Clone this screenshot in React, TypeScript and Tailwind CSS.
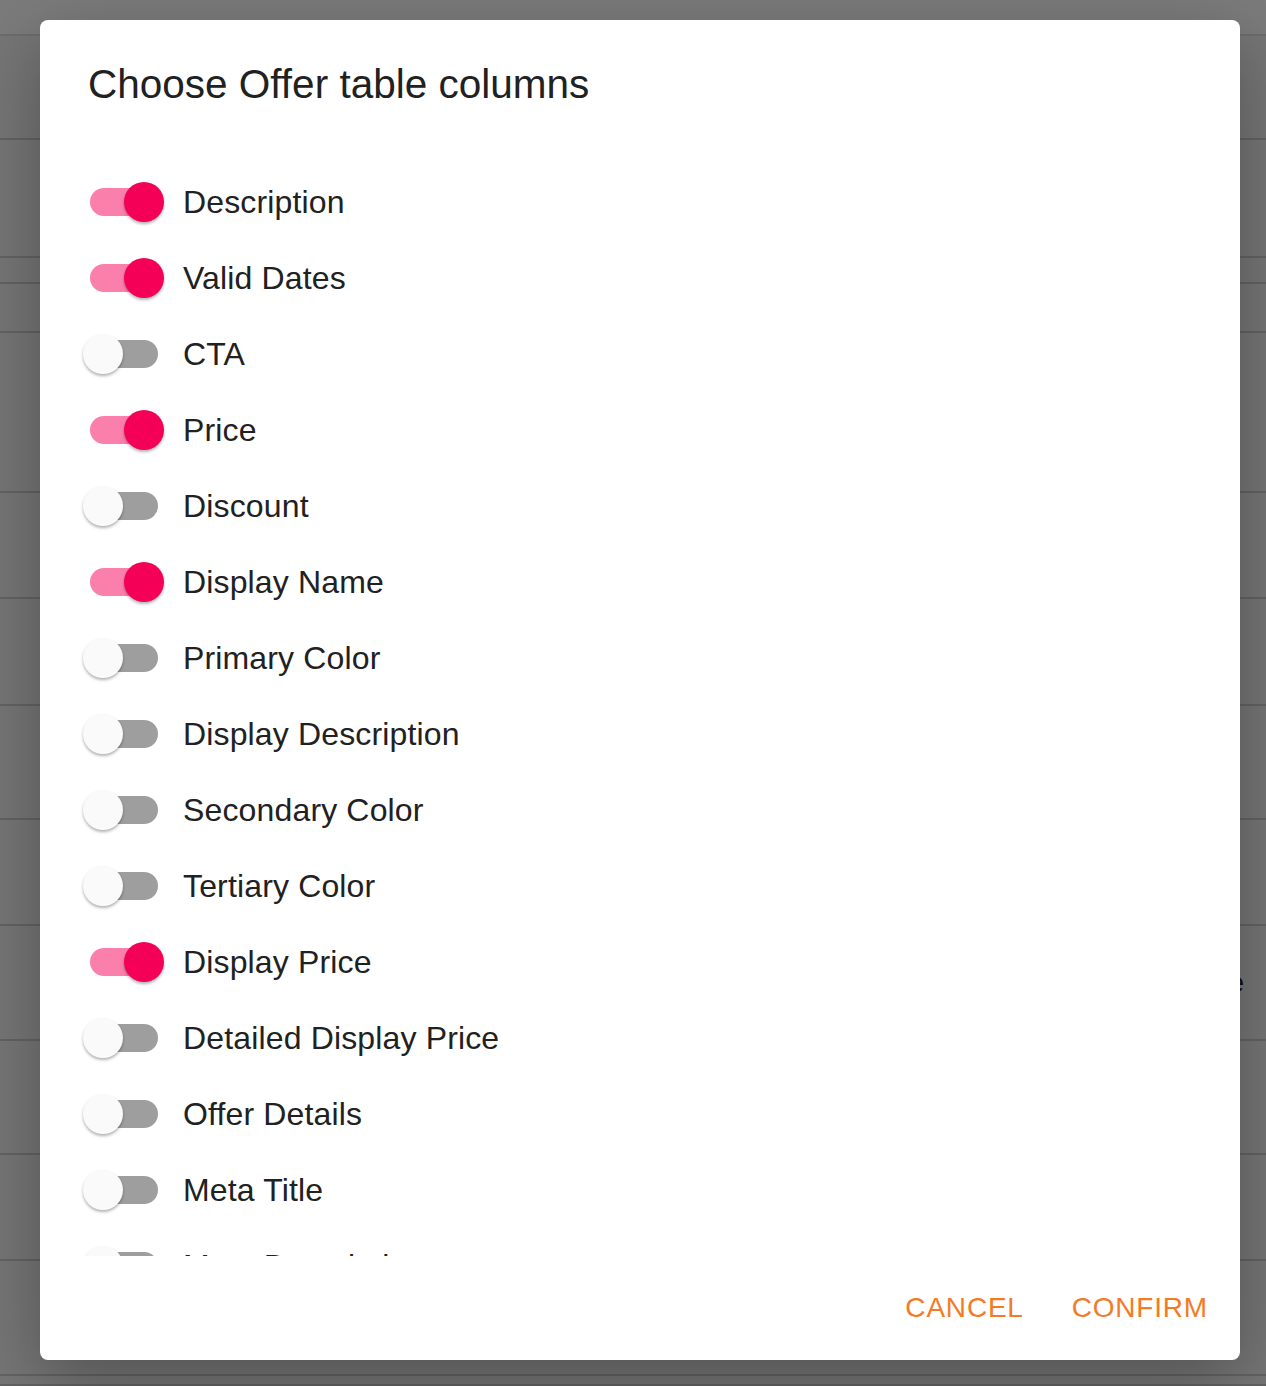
const columns: { label: string; on: boolean }[] = [
  { label: "Description", on: true },
  { label: "Valid Dates", on: true },
  { label: "CTA", on: false },
  { label: "Price", on: true },
  { label: "Discount", on: false },
  { label: "Display Name", on: true },
  { label: "Primary Color", on: false },
  { label: "Display Description", on: false },
  { label: "Secondary Color", on: false },
  { label: "Tertiary Color", on: false },
  { label: "Display Price", on: true },
  { label: "Detailed Display Price", on: false },
  { label: "Offer Details", on: false },
  { label: "Meta Title", on: false },
  { label: "Meta Description", on: false },
];

function Toggle({ on }: { on: boolean }) {
  return (
    <div className="relative h-[76px] w-[117px] shrink-0">
      <div
        className={
          on
            ? "absolute left-[24px] top-[24px] h-[28px] w-[68px] rounded-full bg-[#fa80ab]"
            : "absolute left-[24px] top-[24px] h-[28px] w-[68px] rounded-full bg-[#9e9e9e]"
        }
      />
      <div
        className={
          on
            ? "absolute left-[58px] top-[18px] h-[40px] w-[40px] rounded-full bg-[#f50057] shadow-[0_2px_3px_rgba(0,0,0,0.3)]"
            : "absolute left-[17px] top-[18px] h-[40px] w-[40px] rounded-full bg-[#fafafa] shadow-[0_2px_3px_rgba(0,0,0,0.3)]"
        }
      />
    </div>
  );
}

function BackdropPage() {
  const rows = [36, 104, 118, 26, 49, 160, 106, 107, 114, 106, 115, 114, 106, 115, 10];
  return (
    <div className="flex h-[1386px] flex-col bg-[#ececec]">
      {rows.map((h, i) => (
        <div
          key={i}
          className={
            i === 0
              ? "shrink-0 border-b-2 border-[#d8d8d8] bg-[#f6f6f6]"
              : "flex shrink-0 items-center justify-end border-b-2 border-[#c6c6c6] pr-[22px]"
          }
          style={{ height: h }}
        >
          {i === 10 && (
            <span className="text-[28px] text-[#222]">Price</span>
          )}
        </div>
      ))}
    </div>
  );
}

export default function App() {
  return (
    <div className="relative h-[1386px] w-full overflow-hidden font-['Liberation_Sans',Arial,sans-serif]">
      <BackdropPage />
      <div className="absolute inset-0 bg-black/50" />

      <div className="absolute left-[40px] top-[20px] flex h-[1340px] w-[1200px] flex-col rounded-[8px] bg-white shadow-[0_22px_70px_rgba(0,0,0,0.3)]">
        <div className="px-[48px] pt-[32px]">
          <h2 className="text-[40.5px] leading-[64px] text-[#212121]">
            Choose Offer table columns
          </h2>
        </div>

        <div className="flex-1 overflow-hidden px-[48px] pt-[48px]">
          <div className="-ml-[22px] flex flex-col">
            {columns.map((c) => (
              <div key={c.label} className="flex h-[76px] items-center">
                <Toggle on={c.on} />
                <span className="text-[32px] leading-[48px] tracking-[0.15px] text-[#212121]">
                  {c.label}
                </span>
              </div>
            ))}
          </div>
        </div>

        <div className="flex h-[104px] items-center justify-end gap-[16px] p-[16px]">
          <button className="h-[72px] min-w-[128px] rounded-[8px] px-[16px] text-[28px] uppercase tracking-[0.8px] text-[#f47b26]">
            Cancel
          </button>
          <button className="h-[72px] min-w-[128px] rounded-[8px] px-[16px] text-[28px] uppercase tracking-[0.8px] text-[#f47b26]">
            Confirm
          </button>
        </div>
      </div>
    </div>
  );
}
